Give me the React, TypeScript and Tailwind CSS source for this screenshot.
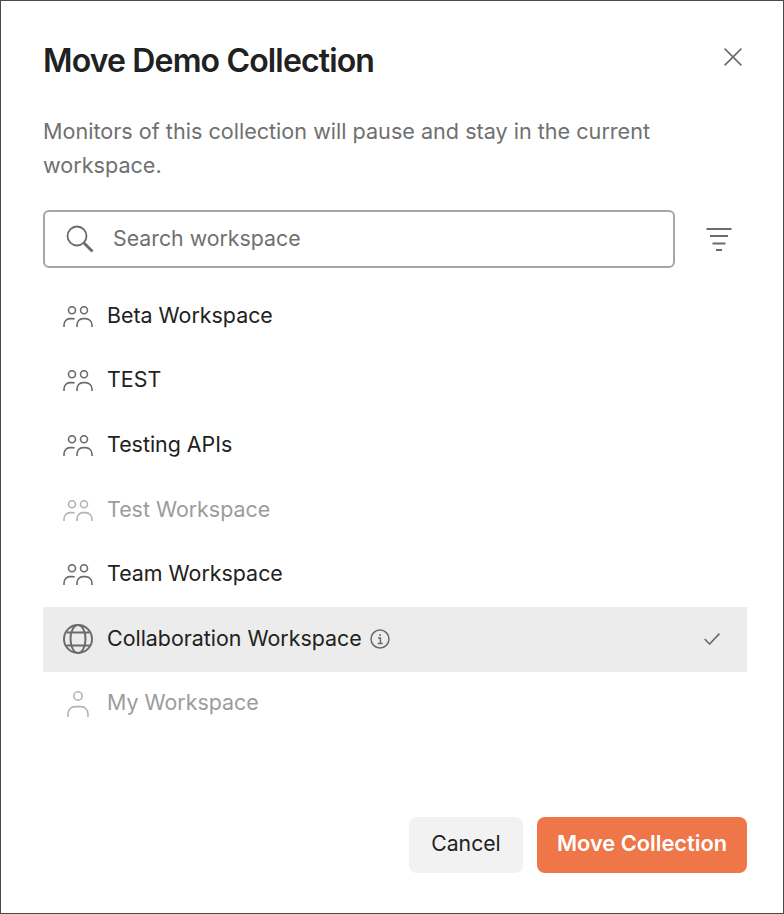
import { ReactNode } from "react";

type Workspace = {
  name: string;
  icon: "team" | "globe" | "user";
  disabled?: boolean;
  selected?: boolean;
};

const workspaces: Workspace[] = [
  { name: "Beta Workspace", icon: "team" },
  { name: "TEST", icon: "team" },
  { name: "Testing APIs", icon: "team" },
  { name: "Test Workspace", icon: "team", disabled: true },
  { name: "Team Workspace", icon: "team" },
  { name: "Collaboration Workspace", icon: "globe", selected: true },
  { name: "My Workspace", icon: "user", disabled: true },
];

function TeamIcon() {
  return (
    <svg width="30" height="21" viewBox="0 0 30 21" fill="none" stroke="currentColor" strokeWidth="1.6">
      <circle cx="9" cy="4.2" r="3.5" />
      <circle cx="21" cy="4.2" r="3.5" />
      <path d="M1 21v-2c0-3.6 2.5-6.4 6-6.4h2.4c.8 0 1.5.1 2.2.4" />
      <path d="M14 21v-2c0-3.6 2.5-6.4 6-6.4h2.6c3.5 0 6.4 2.8 6.4 6.4v2" />
    </svg>
  );
}

function GlobeIcon() {
  return (
    <svg width="30" height="30" viewBox="0 0 30 30" fill="none" stroke="currentColor" strokeWidth="2">
      <circle cx="15" cy="15" r="14" />
      <ellipse cx="15" cy="15" rx="7.5" ry="14" />
      <path d="M3.5 8.5h23M3.5 21.5h23" />
    </svg>
  );
}

function UserIcon() {
  return (
    <svg width="22" height="26" viewBox="0 0 22 26" fill="none" stroke="currentColor" strokeWidth="1.6">
      <circle cx="11" cy="5" r="4.2" />
      <path d="M1 26v-3c0-4.2 3-7.4 7-7.4h6c4 0 7 3.2 7 7.4v3" />
    </svg>
  );
}

function Row({ w }: { w: Workspace }) {
  let icon: ReactNode = <TeamIcon />;
  if (w.icon === "globe") icon = <GlobeIcon />;
  if (w.icon === "user") icon = <UserIcon />;

  return (
    <div
      className={`flex h-[64.6px] items-center pr-[27px] pl-[20px] ${w.selected ? "bg-[#ececec]" : ""} ${
        w.disabled ? "text-[#9c9c9c]" : "text-[#212121]"
      }`}
    >
      <div className={`mr-[14px] flex w-[30px] justify-center ${w.disabled ? "text-[#b4b4b4]" : "text-[#6b6b6b]"}`}>{icon}</div>
      <span className="pb-[3px] text-[21.4px] leading-[32px]">{w.name}</span>
      {w.selected && (
        <svg className="ml-[8px] text-[#6b6b6b]" width="20" height="20" viewBox="0 0 20 20" fill="none" stroke="currentColor" strokeWidth="1.5">
          <circle cx="10" cy="10" r="9" />
          <circle cx="10" cy="6" r="1" fill="currentColor" stroke="none" />
          <path d="M8 9H10.4V14.4M7.8 14.6h5" />
        </svg>
      )}
      {w.selected && (
        <svg className="ml-auto text-[#6b6b6b]" width="16" height="12" viewBox="0 0 16 12" fill="none" stroke="currentColor" strokeWidth="1.6">
          <path d="M.6 6L5.6 11L15.4 .6" />
        </svg>
      )}
    </div>
  );
}

export default function App() {
  return (
    <div className="flex h-[914px] w-[784px] flex-col border border-[#4a4a4a] bg-white pr-[36px] pl-[42px] font-['Inter',sans-serif]">
      {/* Header */}
      <div className="flex items-start justify-between pt-[40px]">
        <h1 className="text-[32px] leading-[40px] font-semibold tracking-[-0.85px] text-[#212121]">Move Demo Collection</h1>
        <svg className="mt-[7px] mr-[5px] text-[#6b6b6b]" width="18" height="18" viewBox="0 0 18 18" fill="none" stroke="currentColor" strokeWidth="1.6">
          <path d="M.6 .6L17.4 17.4M17.4 .6L.6 17.4" />
        </svg>
      </div>

      <p className="mt-[33px] text-[21.6px] leading-[34px] text-[#707070]">
        Monitors of this collection will pause and stay in the current workspace.
      </p>

      {/* Search */}
      <div className="mt-[28px] flex items-center">
        <div className="flex h-[58px] w-[632px] items-center rounded-[6px] border-2 border-[#a6a6a6] pl-[21px]">
          <svg className="text-[#6b6b6b]" width="28" height="28" viewBox="0 0 28 28" fill="none" stroke="currentColor" strokeWidth="1.8">
            <circle cx="11" cy="11" r="9.5" />
            <path d="M18 18L26.5 26.5" strokeWidth="2.8" />
          </svg>
          <span className="ml-[19px] pb-[2px] text-[21.3px] leading-[32px] text-[#707070]">Search workspace</span>
        </div>
        <svg className="ml-[31px] text-[#6b6b6b]" width="26" height="24" viewBox="0 0 26 24" fill="none" stroke="currentColor" strokeWidth="2">
          <path d="M.5 2H25.5M4 9H22M6.5 16.5H19.5M10 23H16" />
        </svg>
      </div>

      {/* Workspace list */}
      <div className="mt-[16px] flex flex-col">
        {workspaces.map((w) => (
          <Row key={w.name} w={w} />
        ))}
      </div>

      {/* Footer */}
      <div className="mt-auto mb-[40px] flex justify-end gap-[14px]">
        <button className="h-[56px] w-[114px] rounded-[8px] bg-[#f2f2f2] pb-[3px] text-[21.2px] text-[#212121]">Cancel</button>
        <button className="h-[56px] w-[210px] rounded-[8px] bg-[#ee7649] pb-[3px] text-[21.8px] font-semibold text-white">Move Collection</button>
      </div>
    </div>
  );
}
